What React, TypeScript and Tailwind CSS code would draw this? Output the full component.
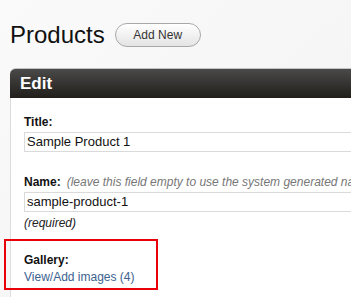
export default function App() {
  return (
    <div className="relative w-[351px] h-[297px] overflow-hidden bg-gradient-to-br from-[#fafafa] to-[#f3f3f3] font-['Liberation_Sans',Arial,sans-serif] text-[#111]">
      {/* Page heading */}
      <div className="flex items-center pl-[10px] pt-[21px]">
        <h1 className="text-[24px] leading-[28px] text-[#111]">Products</h1>
        <button className="ml-[10px] h-[24px] w-[86px] rounded-full border border-[#a8a8a8] bg-gradient-to-b from-white to-[#e4e4e4] text-[12px] text-[#333] shadow-[inset_0_1px_0_#fff]">
          Add New
        </button>
      </div>

      {/* Edit panel */}
      <div className="ml-[10px] mt-[19px] w-[420px]">
        <div className="flex h-[30px] items-center rounded-tl-[6px] border-t border-[#c4c4c4] bg-gradient-to-b from-[#4a4a4a] to-[#221f1b] px-[10px]">
          <span className="text-[17px] font-bold leading-[20px] text-white">Edit</span>
        </div>
        <div className="border-l border-[#dcdcdc] bg-white pl-[13px] pt-[16px] pb-[20px]">
          <label className="block text-[12px] font-bold leading-[16px]">Title:</label>
          <div className="mt-[2px] flex h-[20px] items-center border border-[#dadada] pl-[2px] text-[13px] text-[#111]">
            Sample Product 1
          </div>

          <div className="mt-[22px] flex whitespace-nowrap text-[12px] leading-[16px]">
            <span className="font-bold">Name:</span>
            <span className="ml-[6px] italic text-[#777]">
              (leave this field empty to use the system generated name)
            </span>
          </div>
          <div className="mt-[2px] flex h-[20px] items-center border border-[#dadada] pl-[2px] text-[13px] text-[#111]">
            sample-product-1
          </div>
          <div className="mt-[3px] text-[12px] italic leading-[16px] text-[#222]">(required)</div>

          <label className="mt-[21px] block text-[12px] font-bold leading-[16px]">Gallery:</label>
          <a className="mt-[1px] block text-[12px] leading-[16px] text-[#3b6291]" href="#">
            View/Add images (4)
          </a>
        </div>
      </div>

      {/* Annotation box */}
      <div className="absolute left-[4px] top-[239px] h-[51px] w-[154px] border-2 border-[#e8000b]" />
    </div>
  );
}
